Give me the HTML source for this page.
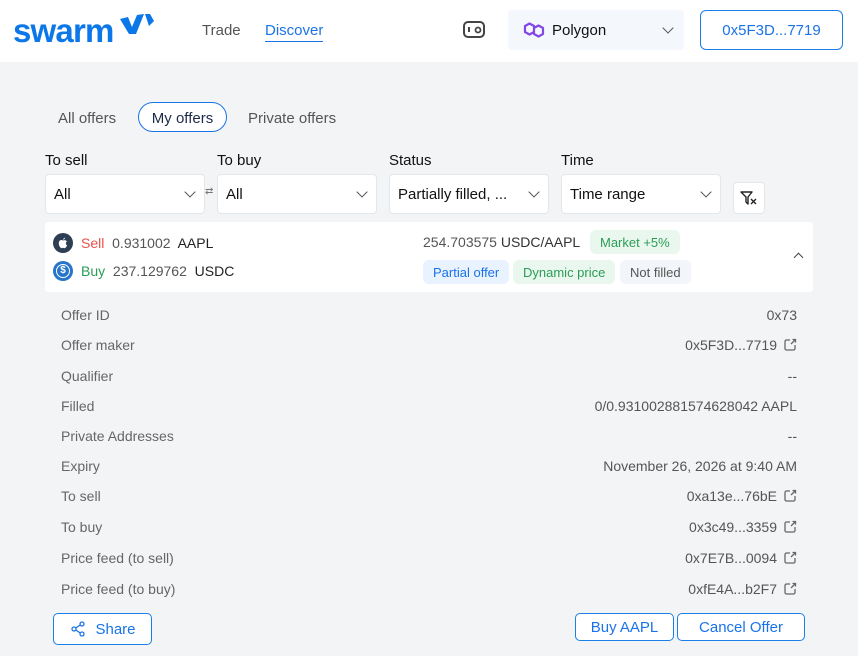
<!DOCTYPE html>
<html><head><meta charset="utf-8"><style>
*{box-sizing:border-box;margin:0;padding:0}
body{width:858px;height:656px;overflow:hidden;background:#f3f4f6;font-family:"Liberation Sans",sans-serif;position:relative;color:#1f2937}
.a{position:absolute}
.hdr{left:0;top:0;width:858px;height:62px;background:#fff}
.sel{background:#fff;border:1px solid #e3e6ea;border-radius:4px;height:40px;top:174px;font-size:15px;color:#111;padding:11px 8px}
.chev{position:absolute;right:10px;top:13px;width:8px;height:8px;border-right:1.3px solid #555;border-bottom:1.3px solid #555;transform:rotate(45deg)}
.lbl{top:152px;font-size:15px;color:#111}
.tag{top:260px;height:24px;border-radius:6px;font-size:13px;padding:5px 10px}
.row{left:61px;font-size:14px;color:#666}
.val{right:61px;font-size:14px;color:#555;text-align:right}
.ext{display:inline-block;margin-left:6px;vertical-align:-2px}
.btn{border:1px solid #1a7fe8;border-radius:5px;color:#1a73e8;font-size:15px;background:#fff;display:flex;align-items:center;justify-content:center}
</style></head><body>
<div class="a hdr"></div>
<div class="a" style="left:13px;top:12px;font-size:33px;font-weight:bold;color:#0b77e8;letter-spacing:-0.8px">swarm</div>
<svg class="a" style="left:120px;top:14px" width="34" height="20" viewBox="0 0 34 20"><path d="M0 5 L8 3 L12 13 L17 1 L24 0 L16 20 L9 20 Z" fill="#0b77e8"/><path d="M25 0 L30 0 L34 7 L29 12 Z" fill="#0b77e8"/></svg>
<div class="a" style="left:202px;top:22px;font-size:15px;color:#555">Trade</div>
<div class="a" style="left:265px;top:22px;font-size:15px;color:#1a73e8;border-bottom:1.5px solid #1a73e8;padding-bottom:2px">Discover</div>
<svg class="a" style="left:462px;top:20px" width="24" height="20" viewBox="0 0 24 20"><rect x="2" y="2" width="20" height="15" rx="4" fill="none" stroke="#444" stroke-width="2"/><line x1="7" y1="7" x2="7" y2="12" stroke="#444" stroke-width="2"/><circle cx="16" cy="10" r="2.5" fill="none" stroke="#444" stroke-width="1.8"/></svg>
<div class="a" style="left:508px;top:10px;width:176px;height:40px;background:#f4f8fd;border-radius:4px"></div>
<svg class="a" style="left:523px;top:20px" width="22" height="20" viewBox="0 0 22 20"><path d="M11 8 V6 L6.5 3.5 L2 6 V12 L6.5 14.5 L11 12 V8 Z M11 8 V14 L15.5 16.5 L20 14 V8 L15.5 5.5 L11 8" fill="none" stroke="#8247e5" stroke-width="2.2" stroke-linejoin="round"/></svg>
<div class="a" style="left:552px;top:22px;font-size:15px;color:#111">Polygon</div>
<div class="a" style="left:664px;top:24px;width:8px;height:8px;border-right:1.3px solid #555;border-bottom:1.3px solid #555;transform:rotate(45deg)"></div>
<div class="a btn" style="left:700px;top:10px;width:143px;height:40px;border-radius:6px">0x5F3D...7719</div>

<div class="a" style="left:58px;top:110px;font-size:15px;color:#555">All offers</div>
<div class="a" style="left:138px;top:102px;width:89px;height:30px;border:1px solid #1a73e8;border-radius:15px;background:#fff;font-size:15px;color:#1e2a4a;display:flex;align-items:center;justify-content:center;padding-top:2px">My offers</div>
<div class="a" style="left:248px;top:110px;font-size:15px;color:#555">Private offers</div>

<div class="a lbl" style="left:45px">To sell</div>
<div class="a lbl" style="left:217px">To buy</div>
<div class="a lbl" style="left:389px">Status</div>
<div class="a lbl" style="left:561px">Time</div>
<div class="a sel" style="left:45px;width:160px">All<span class="chev"></span></div>
<div class="a" style="left:205px;top:186px;font-size:10px;color:#777">⇄</div>
<div class="a sel" style="left:217px;width:160px">All<span class="chev"></span></div>
<div class="a sel" style="left:389px;width:160px">Partially filled, ...<span class="chev"></span></div>
<div class="a sel" style="left:561px;width:160px">Time range<span class="chev"></span></div>
<div class="a" style="left:733px;top:182px;width:32px;height:32px;background:#fff;border:1px solid #e3e6ea;border-radius:4px"></div>
<svg class="a" style="left:740px;top:189px" width="18" height="18" viewBox="0 0 18 18"><path d="M1 3 H12 L8 8 V15 L6 13 V8 Z" fill="none" stroke="#222" stroke-width="1.4" stroke-linejoin="round"/><path d="M11 10 L16 15 M16 10 L11 15" stroke="#222" stroke-width="1.4"/></svg>

<div class="a" style="left:45px;top:222px;width:768px;height:70px;background:#fff;border-radius:3px"></div>
<svg class="a" style="left:53px;top:233px" width="20" height="20" viewBox="0 0 20 20"><circle cx="10" cy="10" r="10" fill="#2e3f55"/><path d="M10 7.5 C8 6.3 5.8 7.5 5.8 10.3 C5.8 13 7.5 15.2 8.6 15.2 C9.4 15.2 9.5 14.8 10 14.8 C10.5 14.8 10.6 15.2 11.4 15.2 C12.5 15.2 13.6 13.6 14.1 12.3 C12.6 11.6 12.5 9.3 13.9 8.5 C13 7 11.3 6.8 10 7.5 Z M10.2 6.8 C10.2 5.6 11 4.8 12 4.7 C12 5.8 11.2 6.7 10.2 6.8 Z" fill="#fff"/></svg>
<div class="a" style="left:53px;top:261px;width:20px;height:20px;border-radius:50%;background:#2775ca"></div>
<div class="a" style="left:56px;top:264px;width:14px;height:14px;border-radius:50%;border:1.5px solid #fff;color:#fff;font-size:10px;text-align:center;line-height:11px;font-weight:bold">$</div>
<div class="a" style="left:81px;top:235px;font-size:14px"><span style="color:#e5534b">Sell</span>&nbsp; <span style="color:#555">0.931002</span>&nbsp; <span style="color:#222">AAPL</span></div>
<div class="a" style="left:81px;top:263px;font-size:14px"><span style="color:#2a9d54">Buy</span>&nbsp; <span style="color:#555">237.129762</span>&nbsp; <span style="color:#222">USDC</span></div>
<div class="a" style="left:423px;top:234px;font-size:14px;color:#555">254.703575 <span style="color:#333">USDC/AAPL</span></div>
<div class="a tag" style="left:590px;top:230px;background:#eaf7ef;color:#2a9d54">Market +5%</div>
<div class="a tag" style="left:423px;background:#e9f3ff;color:#1a73e8">Partial offer</div>
<div class="a tag" style="left:513px;background:#eaf7ef;color:#2a9d54">Dynamic price</div>
<div class="a tag" style="left:620px;background:#f2f5f9;color:#555">Not filled</div>
<div class="a" style="left:795px;top:254px;width:7px;height:7px;border-left:1.3px solid #444;border-top:1.3px solid #444;transform:rotate(45deg)"></div>

<div class="a row" style="top:307px">Offer ID</div><div class="a val" style="top:307px">0x73</div>
<div class="a row" style="top:337px">Offer maker</div><div class="a val" style="top:337px">0x5F3D...7719<svg class="ext" width="14" height="14" viewBox="0 0 14 14"><path d="M7 2 H3.5 A1.5 1.5 0 0 0 2 3.5 V10.5 A1.5 1.5 0 0 0 3.5 12 H10.5 A1.5 1.5 0 0 0 12 10.5 V7 M8 6 L12.5 1.5 M9.5 1.5 H12.5 V4.5" fill="none" stroke="#666" stroke-width="1.3"/></svg></div>
<div class="a row" style="top:368px">Qualifier</div><div class="a val" style="top:368px">--</div>
<div class="a row" style="top:398px">Filled</div><div class="a val" style="top:398px">0/0.931002881574628042 AAPL</div>
<div class="a row" style="top:428px">Private Addresses</div><div class="a val" style="top:428px">--</div>
<div class="a row" style="top:458px">Expiry</div><div class="a val" style="top:458px">November 26, 2026 at 9:40 AM</div>
<div class="a row" style="top:488px">To sell</div><div class="a val" style="top:488px">0xa13e...76bE<svg class="ext" width="14" height="14" viewBox="0 0 14 14"><path d="M7 2 H3.5 A1.5 1.5 0 0 0 2 3.5 V10.5 A1.5 1.5 0 0 0 3.5 12 H10.5 A1.5 1.5 0 0 0 12 10.5 V7 M8 6 L12.5 1.5 M9.5 1.5 H12.5 V4.5" fill="none" stroke="#666" stroke-width="1.3"/></svg></div>
<div class="a row" style="top:519px">To buy</div><div class="a val" style="top:519px">0x3c49...3359<svg class="ext" width="14" height="14" viewBox="0 0 14 14"><path d="M7 2 H3.5 A1.5 1.5 0 0 0 2 3.5 V10.5 A1.5 1.5 0 0 0 3.5 12 H10.5 A1.5 1.5 0 0 0 12 10.5 V7 M8 6 L12.5 1.5 M9.5 1.5 H12.5 V4.5" fill="none" stroke="#666" stroke-width="1.3"/></svg></div>
<div class="a row" style="top:550px">Price feed (to sell)</div><div class="a val" style="top:550px">0x7E7B...0094<svg class="ext" width="14" height="14" viewBox="0 0 14 14"><path d="M7 2 H3.5 A1.5 1.5 0 0 0 2 3.5 V10.5 A1.5 1.5 0 0 0 3.5 12 H10.5 A1.5 1.5 0 0 0 12 10.5 V7 M8 6 L12.5 1.5 M9.5 1.5 H12.5 V4.5" fill="none" stroke="#666" stroke-width="1.3"/></svg></div>
<div class="a row" style="top:581px">Price feed (to buy)</div><div class="a val" style="top:581px">0xfE4A...b2F7<svg class="ext" width="14" height="14" viewBox="0 0 14 14"><path d="M7 2 H3.5 A1.5 1.5 0 0 0 2 3.5 V10.5 A1.5 1.5 0 0 0 3.5 12 H10.5 A1.5 1.5 0 0 0 12 10.5 V7 M8 6 L12.5 1.5 M9.5 1.5 H12.5 V4.5" fill="none" stroke="#666" stroke-width="1.3"/></svg></div>

<div class="a btn" style="left:53px;top:613px;width:99px;height:32px;padding-left:26px;padding-top:1px">Share</div>
<svg class="a" style="left:70px;top:621px" width="16" height="16" viewBox="0 0 16 16"><circle cx="12" cy="3" r="2" fill="none" stroke="#1a73e8" stroke-width="1.3"/><circle cx="4" cy="8" r="2" fill="none" stroke="#1a73e8" stroke-width="1.3"/><circle cx="12" cy="13" r="2" fill="none" stroke="#1a73e8" stroke-width="1.3"/><path d="M5.8 7 L10.2 4 M5.8 9 L10.2 12" stroke="#1a73e8" stroke-width="1.3"/></svg>
<div class="a btn" style="left:575px;top:613px;width:99px;height:28px;padding-top:1px">Buy AAPL</div>
<div class="a btn" style="left:677px;top:613px;width:128px;height:28px;padding-top:1px">Cancel Offer</div>
</body></html>
